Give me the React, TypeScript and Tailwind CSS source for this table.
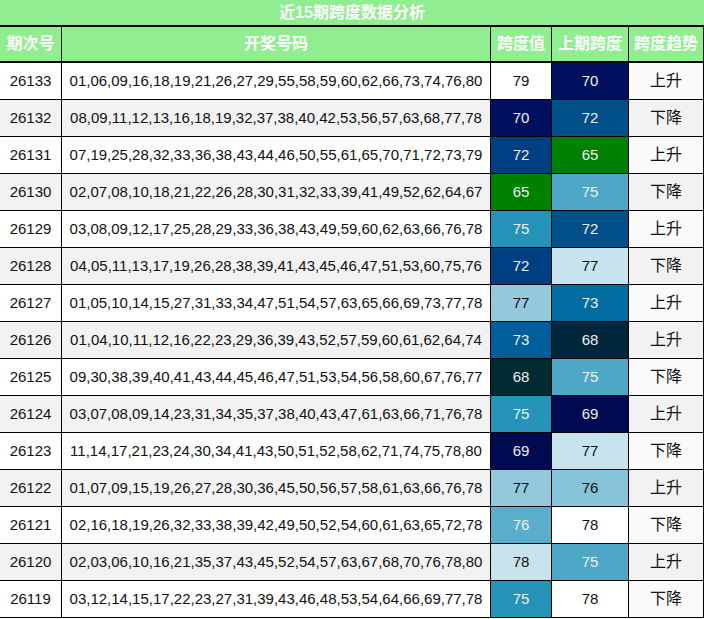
type Row = {
  issue: string;
  nums: string;
  span: number;
  spanBg: string;
  spanDark: boolean;
  prev: number;
  prevBg: string;
  prevDark: boolean;
  trend: string;
};

const rows: Row[] = [
  { issue: "26133", nums: "01,06,09,16,18,19,21,26,27,29,55,58,59,60,62,66,73,74,76,80", span: 79, spanBg: "bg-white", spanDark: false, prev: 70, prevBg: "bg-[#000f5e]", prevDark: true, trend: "上升" },
  { issue: "26132", nums: "08,09,11,12,13,16,18,19,32,37,38,40,42,53,56,57,63,68,77,78", span: 70, spanBg: "bg-[#000f5e]", spanDark: true, prev: 72, prevBg: "bg-[#004f88]", prevDark: true, trend: "下降" },
  { issue: "26131", nums: "07,19,25,28,32,33,36,38,43,44,46,50,55,61,65,70,71,72,73,79", span: 72, spanBg: "bg-[#003f82]", spanDark: true, prev: 65, prevBg: "bg-[#008000]", prevDark: true, trend: "上升" },
  { issue: "26130", nums: "02,07,08,10,18,21,22,26,28,30,31,32,33,39,41,49,52,62,64,67", span: 65, spanBg: "bg-[#008000]", spanDark: true, prev: 75, prevBg: "bg-[#4ea7c6]", prevDark: true, trend: "下降" },
  { issue: "26129", nums: "03,08,09,12,17,25,28,29,33,36,38,43,49,59,60,62,63,66,76,78", span: 75, spanBg: "bg-[#2593b8]", spanDark: true, prev: 72, prevBg: "bg-[#004f88]", prevDark: true, trend: "上升" },
  { issue: "26128", nums: "04,05,11,13,17,19,26,28,38,39,41,43,45,46,47,51,53,60,75,76", span: 72, spanBg: "bg-[#003f82]", spanDark: true, prev: 77, prevBg: "bg-[#c7e4ee]", prevDark: false, trend: "下降" },
  { issue: "26127", nums: "01,05,10,14,15,27,31,33,34,47,51,54,57,63,65,66,69,73,77,78", span: 77, spanBg: "bg-[#93c9db]", spanDark: false, prev: 73, prevBg: "bg-[#006ca0]", prevDark: true, trend: "上升" },
  { issue: "26126", nums: "01,04,10,11,12,16,22,23,29,36,39,43,52,57,59,60,61,62,64,74", span: 73, spanBg: "bg-[#005f9a]", spanDark: true, prev: 68, prevBg: "bg-[#00263a]", prevDark: true, trend: "上升" },
  { issue: "26125", nums: "09,30,38,39,40,41,43,44,45,46,47,51,53,54,56,58,60,67,76,77", span: 68, spanBg: "bg-[#002b33]", spanDark: true, prev: 75, prevBg: "bg-[#4ea7c6]", prevDark: true, trend: "下降" },
  { issue: "26124", nums: "03,07,08,09,14,23,31,34,35,37,38,40,43,47,61,63,66,71,76,78", span: 75, spanBg: "bg-[#2593b8]", spanDark: true, prev: 69, prevBg: "bg-[#000a50]", prevDark: true, trend: "上升" },
  { issue: "26123", nums: "11,14,17,21,23,24,30,34,41,43,50,51,52,58,62,71,74,75,78,80", span: 69, spanBg: "bg-[#000a50]", spanDark: true, prev: 77, prevBg: "bg-[#c7e4ee]", prevDark: false, trend: "下降" },
  { issue: "26122", nums: "01,07,09,15,19,26,27,28,30,36,45,50,56,57,58,61,63,66,76,78", span: 77, spanBg: "bg-[#93c9db]", spanDark: false, prev: 76, prevBg: "bg-[#88c4d9]", prevDark: false, trend: "上升" },
  { issue: "26121", nums: "02,16,18,19,26,32,33,38,39,42,49,50,52,54,60,61,63,65,72,78", span: 76, spanBg: "bg-[#5aaecb]", spanDark: true, prev: 78, prevBg: "bg-white", prevDark: false, trend: "下降" },
  { issue: "26120", nums: "02,03,06,10,16,21,35,37,43,45,52,54,57,63,67,68,70,76,78,80", span: 78, spanBg: "bg-[#c7e4ee]", spanDark: false, prev: 75, prevBg: "bg-[#4ea7c6]", prevDark: true, trend: "上升" },
  { issue: "26119", nums: "03,12,14,15,17,22,23,27,31,39,43,46,48,53,54,64,66,69,77,78", span: 75, spanBg: "bg-[#2593b8]", spanDark: true, prev: 78, prevBg: "bg-white", prevDark: false, trend: "下降" },
];

const cell = "flex items-center justify-center border-r border-b border-black";

export default function App() {
  return (
    <div className="w-[704px] font-['Liberation_Sans','Noto_Sans_CJK_SC',sans-serif] text-[15px] text-[#111]">
      {/* title */}
      <div className="h-[27px] flex items-center justify-center bg-[#90ee90] border-b-2 border-black text-white font-bold text-[16px]">
        近15期跨度数据分析
      </div>

      {/* header */}
      <div className="grid grid-cols-[62px_429px_61px_77px_75px] h-[36px] bg-[#90ee90] text-white font-bold text-[16px] border-b-2 border-black">
        <div className="flex items-center justify-center border-r border-black">期次号</div>
        <div className="flex items-center justify-center border-r border-black">开奖号码</div>
        <div className="flex items-center justify-center border-r border-black">跨度值</div>
        <div className="flex items-center justify-center border-r border-black">上期跨度</div>
        <div className="flex items-center justify-center border-r border-black">跨度趋势</div>
      </div>

      {rows.map((r, i) => {
        const bg = i % 2 === 1 ? "bg-[#f2f2f2]" : "bg-white";
        const trendBg = i % 2 === 1 ? "bg-[#f2f2f2]" : "bg-[#fafafa]";
        return (
          <div key={r.issue} className="grid grid-cols-[62px_429px_61px_77px_75px] h-[37px]">
            <div className={`${cell} ${bg}`}>{r.issue}</div>
            <div className={`${cell} ${bg}`}>{r.nums}</div>
            <div className={`${cell} ${r.spanBg} ${r.spanDark ? "text-[#eeeeee]" : "text-[#111]"}`}>{r.span}</div>
            <div className={`${cell} ${r.prevBg} ${r.prevDark ? "text-[#eeeeee]" : "text-[#111]"}`}>{r.prev}</div>
            <div className={`${cell} ${trendBg} text-[16px]`}>{r.trend}</div>
          </div>
        );
      })}
    </div>
  );
}
